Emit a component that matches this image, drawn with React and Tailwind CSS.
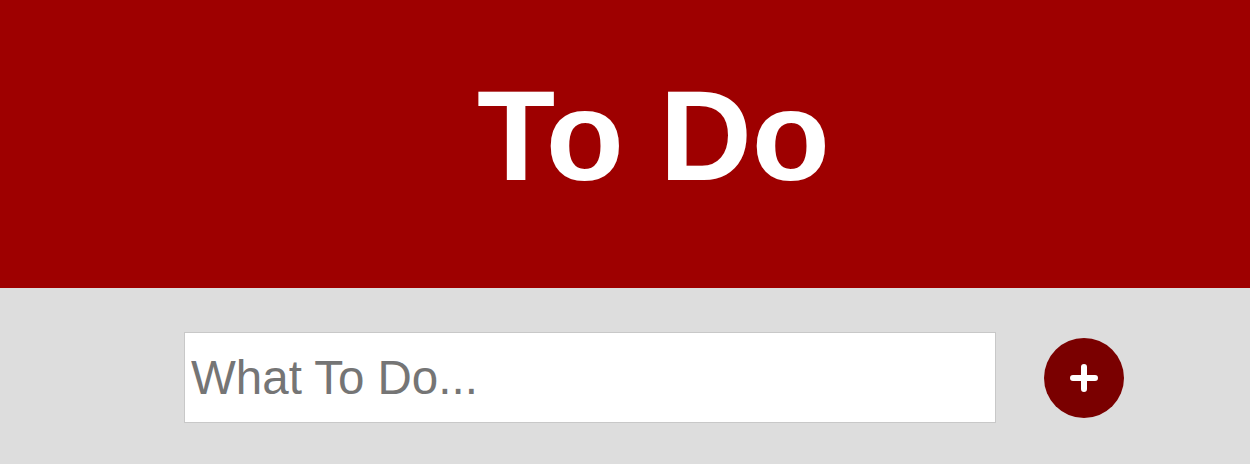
export default function App() {
  return (
    <div className="w-[1250px] h-[464px] bg-[#dddddd] font-['Liberation_Sans',Arial,sans-serif]">
      <header className="h-[288px] bg-[#9e0000] pt-[72px] pl-[57px]">
        <h1 className="text-center text-white font-bold text-[128px] leading-none">To Do</h1>
      </header>
      <div className="flex justify-center items-center pt-[44px] pl-[58px]">
        <input
          type="text"
          placeholder="What To Do..."
          className="w-[812px] h-[91px] bg-white border border-[#c8c8c8] px-[6px] text-[47.5px] text-[#333] placeholder:text-[#757575] outline-none font-['Liberation_Sans',Arial,sans-serif]"
        />
        <button className="ml-[48px] w-[80px] h-[80px] rounded-full bg-[#7a0000] flex items-center justify-center">
          <svg width="30" height="30" viewBox="0 0 30 30">
            <path d="M15 4 V26 M4 15 H26" stroke="white" strokeWidth="6" strokeLinecap="round" fill="none" />
          </svg>
        </button>
      </div>
    </div>
  );
}
